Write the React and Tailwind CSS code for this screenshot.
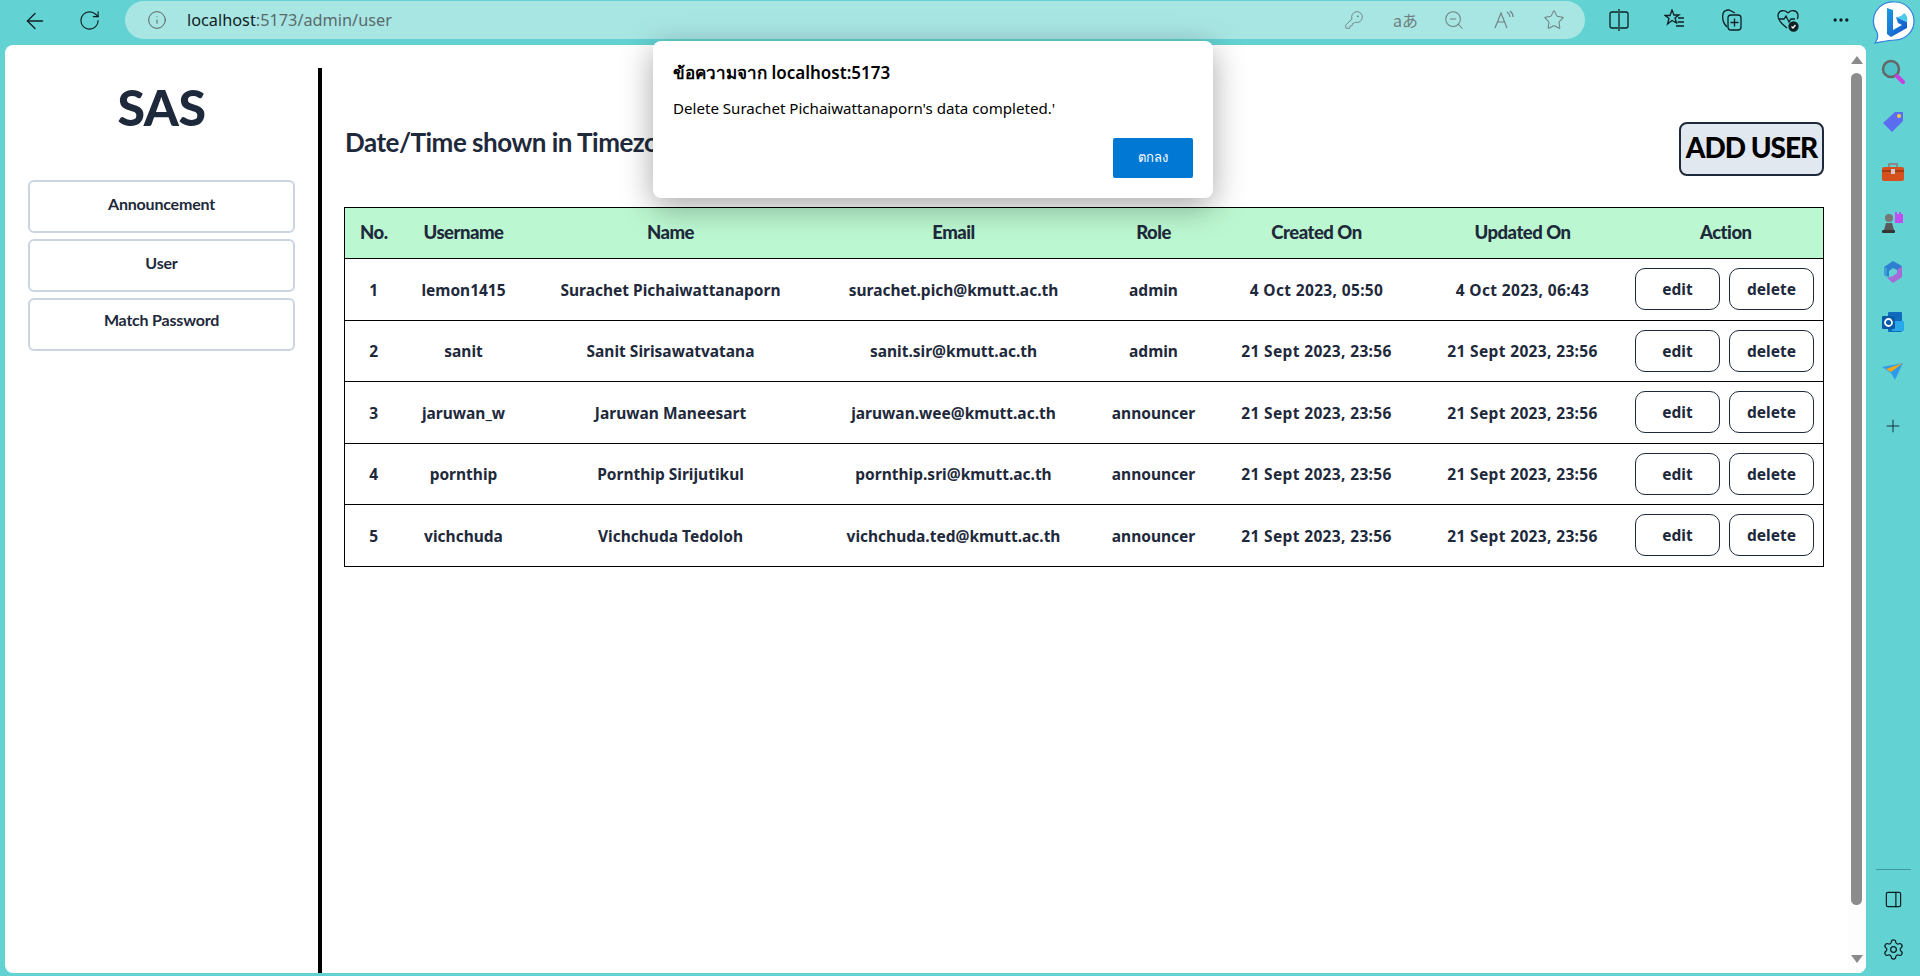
import React from "react";
import { ArrowLeft, RotateCw, Info, KeyRound, ZoomOut, Star, Plus, Settings, PanelRight, MoreHorizontal } from "lucide-react";

const users = [
  ["1", "lemon1415", "Surachet Pichaiwattanaporn", "surachet.pich@kmutt.ac.th", "admin", "4 Oct 2023, 05:50", "4 Oct 2023, 06:43"],
  ["2", "sanit", "Sanit Sirisawatvatana", "sanit.sir@kmutt.ac.th", "admin", "21 Sept 2023, 23:56", "21 Sept 2023, 23:56"],
  ["3", "jaruwan_w", "Jaruwan Maneesart", "jaruwan.wee@kmutt.ac.th", "announcer", "21 Sept 2023, 23:56", "21 Sept 2023, 23:56"],
  ["4", "pornthip", "Pornthip Sirijutikul", "pornthip.sri@kmutt.ac.th", "announcer", "21 Sept 2023, 23:56", "21 Sept 2023, 23:56"],
  ["5", "vichchuda", "Vichchuda Tedoloh", "vichchuda.ted@kmutt.ac.th", "announcer", "21 Sept 2023, 23:56", "21 Sept 2023, 23:56"],
];
const heads = [["No.", "w-[58px]"], ["Username", "w-[122px]"], ["Name", "w-[292px]"], ["Email", "w-[274px]"], ["Role", "w-[126px]"], ["Created On", "w-[200px]"], ["Updated On", "w-[212px]"], ["Action", ""]];

const Bing = () => (
  <svg width="48" height="48" viewBox="0 0 48 48">
    <defs>
      <linearGradient id="bingA" x1="0" y1="0" x2="1" y2="1"><stop offset="0" stopColor="#1b9de2" /><stop offset="1" stopColor="#1450c8" /></linearGradient>
    </defs>
    <path d="M25 3a19 19 0 0 1 0 38c-6 0-12 1.500-20 3 3-4 3.500-7 2-11A19 19 0 0 1 25 3z" fill="#fff" stroke="#2f80e0" strokeWidth="1.200" />
    <path d="M17 9l6 2v20l9-5-4-2-2-6 11 5v6l-16 9-4-3z" fill="url(#bingA)" />
    <path d="M26 18l11 5c1-3 0-7-3-9-1 2-4 4-8 4z" fill="#36c5e8" opacity=".9" />
  </svg>
);

const Rail = () => (
  <div className="w-[54px] h-[928px] flex flex-col items-center relative">
    <svg className="mt-[13px]" width="24" height="28" viewBox="0 0 24 28"><circle cx="10" cy="11" r="8" fill="#4fc3c9" stroke="#666" strokeWidth="2.500" /><path d="M16 18l6 6" stroke="#c740e0" strokeWidth="4" strokeLinecap="round" /></svg>
    <svg className="mt-[24px]" width="24" height="24" viewBox="0 0 24 24"><path d="M14 2h8v9L11 22 2 13z" fill="#5b6cf0" /><circle cx="18" cy="6" r="2" fill="#f5d033" /></svg>
    <svg className="mt-[28px]" width="24" height="20" viewBox="0 0 24 20"><path d="M8 5V2h8v3" fill="none" stroke="#8a8a8a" strokeWidth="2" /><rect x="1" y="5" width="22" height="14" rx="2" fill="#d5501c" /><rect x="1" y="8" width="22" height="2" fill="#a53c12" /><rect x="10" y="7" width="4" height="5" fill="#ccc" /></svg>
    <svg className="mt-[28px]" width="24" height="24" viewBox="0 0 24 24"><path d="M14 2h2v2h2V2h2v2h2V2v11h-8z" fill="#c04ef0" /><circle cx="8" cy="8" r="4" fill="#777" /><path d="M5 13h6l2 7H3z" fill="#5a5a5a" /><rect x="1" y="20" width="13" height="3" rx="1" fill="#333" /></svg>
    <svg className="mt-[26px]" width="22" height="24" viewBox="0 0 22 24"><path d="M11 1l9 5-3 5-6-3-4 3v6L2 15V7z" fill="#2d7fd0" /><path d="M20 6v11l-9 6-6-5 6-2 4-3v-3z" fill="#a66bd8" /><path d="M2 7l3 1v9l-3-2z" fill="#3c9fd8" /></svg>
    <svg className="mt-[27px]" width="22" height="22" viewBox="0 0 22 22"><rect x="6" y="1" width="14" height="20" rx="1" fill="#0f6cbd" /><path d="M10 10h12v10H10z" fill="#28a8ea" /><rect x="0" y="5" width="13" height="13" rx="1" fill="#0a5aa8" /><circle cx="6.500" cy="11.500" r="3.500" fill="none" stroke="#fff" strokeWidth="1.800" /></svg>
    <svg className="mt-[30px]" width="22" height="18" viewBox="0 0 22 18"><path d="M0 4l21-4-8 17-4-7z" fill="#2f9be8" /><path d="M4 6L21 0 9 9z" fill="#f0a818" /></svg>
    <Plus className="mt-[35px] text-[#123]" size={20} strokeWidth={1.100} />
    <div className="flex-1" />
    <div className="w-[35px] h-px bg-[#3f9a9c] mb-[20px]" />
    <PanelRight size={19} strokeWidth={1.500} className="text-[#0b1e22] mb-[29px]" />
    <Settings size={23} strokeWidth={1.300} className="text-[#0b1e22] mb-[12px]" />
  </div>
);

export default function App() {
  return (
    <div className="w-[1920px] h-[976px] bg-[#62d2d2] overflow-hidden relative font-['Noto_Sans',sans-serif] text-[#1e293b]">
      {/* Browser toolbar */}
      <div className="h-[45px] flex items-center relative">
        <ArrowLeft className="ml-[22px] -mt-[4px] text-[#0f2024]" size={26} strokeWidth={1.200} />
        <RotateCw className="ml-[30px] -mt-[4px] text-[#0f2024]" size={23} strokeWidth={1.200} />
        <div className="ml-[24px] w-[1460px] h-[38px] -mt-[5px] rounded-full bg-[#a8e6e4] flex items-center">
          <Info className="ml-[22px] text-[#555]" size={20} strokeWidth={1.100} />
          <span className="ml-[20px] text-[16.300px] text-[#5a6a6c]"><span className="text-[#101c1e]">localhost</span>:5173/admin/user</span>
          <div className="flex-1" />
          <div className="flex items-center gap-[29px] mr-[20px] text-[#6f7d7e]">
            <KeyRound size={20} strokeWidth={1.100} />
            <span className="text-[16px] w-[21px] leading-none whitespace-nowrap font-['Noto_Sans_CJK_JP','Noto_Sans',sans-serif]">aあ</span>
            <ZoomOut size={22} strokeWidth={1.100} />
            <svg width="20" height="20" viewBox="0 0 20 20" fill="none" stroke="currentColor" strokeWidth="1.100"><path d="M1 18L7 3l6 15M3.500 12h7" /><path d="M13 2c2 1.500 3 3 3 5M16 1c2 1.500 3 3.500 3 6" /></svg>
            <Star size={22} strokeWidth={1.100} />
          </div>
        </div>
        <div className="flex items-center -mt-[5px] text-[#0f2024]">
          <svg className="ml-[24px]" width="20" height="22" viewBox="0 0 20 22" fill="none" stroke="currentColor" strokeWidth="1.300"><path d="M9 3H3a2 2 0 0 0-2 2v12a2 2 0 0 0 2 2h6M11 3h6a2 2 0 0 1 2 2v12a2 2 0 0 1-2 2h-6M10 0v22" /></svg>
          <svg className="ml-[35px]" width="22" height="22" viewBox="0 0 22 22" fill="none" stroke="currentColor" strokeWidth="1.300"><path d="M8 1l2 5h5l-4 3 1.500 5L8 11.500 3.500 15 5 9.500 1 6.500h5z" /><path d="M14 9h6M13.500 13h6.500M12 17h8" /></svg>
          <svg className="ml-[35px]" width="22" height="24" viewBox="0 0 22 24" fill="none" stroke="currentColor" strokeWidth="1.300"><path d="M6 19c-3-3-5-8-4-13 .5-3 3-4 6-4l6 3" /><rect x="7" y="7" width="13" height="15" rx="3" /><path d="M13.500 10.500v8M9.500 14.500h8" /></svg>
          <svg className="ml-[33px]" width="24" height="24" viewBox="0 0 24 24" fill="none" stroke="currentColor" strokeWidth="1.300"><path d="M12 5c-3-4-10-3-10 3 0 5 5 9 9 12M12 5c3-4 10-3 10 3 0 1-.3 2-.7 3" /><path d="M3 11h5l2-3 3 6 2-3h4" /><circle cx="17.500" cy="18.500" r="4.500" fill="#0f2024" /><path d="M15.500 18.500l1.500 1.500 2.500-3" stroke="#fff" /></svg>
          <MoreHorizontal className="ml-[31px]" size={20} />
          <div className="ml-[19px] mt-[5px]"><Bing /></div>
        </div>
      </div>

      <div className="flex">
        {/* Page */}
        <div className="ml-[5px] w-[1861px] h-[928px] rounded-[8px] bg-white flex overflow-hidden">
          <aside className="w-[313px] flex flex-col items-center">
            <h1 className="mt-[22px] h-[82px] text-[50px] leading-[80px] font-black font-['Lato',sans-serif] tracking-[-0.5px]">SAS</h1>
            <div className="mt-[31px] flex flex-col gap-[6px] w-[267px] font-['Lato',sans-serif] font-bold text-[16px]">
              {[["Announcement", "pt-[10px]"], ["User", "pt-[10px]"], ["Match Password", "pt-[8px]"]].map(([t, p]) => (
                <div key={t} className={`h-[53px] rounded-[6px] border-2 border-[#cbd5e1] text-center leading-[24px] tracking-[-0.2px] ${p}`}>{t}</div>
              ))}
            </div>
          </aside>
          <div className="w-[4px] mt-[23px] bg-black" />
          <main className="flex-1 pl-[22px] pr-[24px] pt-[77px]">
            <div className="h-[54px] flex items-center justify-between">
              <h2 className="pl-[1px] pb-[13px] text-[26px] font-bold tracking-[-0.5px] font-['Lato',sans-serif]">Date/Time shown in Timezone: Asia/Bangkok</h2>
              <button className="w-[145px] h-[54px] pb-[4px] rounded-[8px] border-2 border-[#1e293b] bg-[#e2e8f0] text-black text-[28px] font-black tracking-[-1px] font-['Lato',sans-serif] whitespace-nowrap">ADD USER</button>
            </div>
            <table className="mt-[31px] w-[1480px] table-fixed border-collapse border border-black">
              <thead>
                <tr className="h-[51px] bg-[#bbf7d0] border-b border-black font-['Lato',sans-serif] text-[18.500px]">
                  {heads.map(([h, w]) => <th key={h} className={`${w} font-black tracking-[-0.5px] p-0`}>{h}</th>)}
                </tr>
              </thead>
              <tbody>
                {users.map((u) => (
                  <tr key={u[0]} className="h-[61.500px] border-b border-black text-[15.500px] font-bold">
                    {u.map((c, i) => <td key={i} className={`text-center p-0 pt-[2px] whitespace-nowrap ${i > 4 ? "tracking-[0.35px]" : ""}`}>{c}</td>)}
                    <td className="p-0">
                      <div className="flex gap-[9px] pl-[6px]">
                        <button className="w-[85px] h-[42px] pt-[1px] pl-[1px] rounded-[10px] border border-[#1e293b] font-bold">edit</button>
                        <button className="w-[85px] h-[42px] pt-[1px] pl-[1px] rounded-[10px] border border-[#1e293b] font-bold">delete</button>
                      </div>
                    </td>
                  </tr>
                ))}
              </tbody>
            </table>
          </main>
          {/* Scrollbar */}
          <div className="w-[18px] bg-[#fdfdfd] flex flex-col items-center pr-[1px]">
            <div className="mt-[11px] w-0 h-0 border-x-[6px] border-x-transparent border-b-[8px] border-b-[#8a8a8a]" />
            <div className="mt-[9px] w-[11px] h-[832px] rounded-full bg-[#8c8c8c]" />
            <div className="mt-[50px] w-0 h-0 border-x-[6px] border-x-transparent border-t-[8px] border-t-[#8a8a8a]" />
          </div>
        </div>
        <Rail />
      </div>

      {/* Alert dialog */}
      <div className="absolute left-[653px] top-[41px] w-[560px] h-[157px] rounded-[8px] bg-white shadow-[0_8px_32px_rgba(0,0,0,0.35)] pt-[21px] px-[20px] text-black">
        <div className="text-[17px] font-semibold leading-[22px] font-['Noto_Sans','Noto_Sans_CJK_SC',sans-serif]">ข้อความจาก localhost:5173</div>
        <div className="mt-[14px] text-[15.100px] leading-[20px]">Delete Surachet Pichaiwattanaporn's data completed.'</div>
        <div className="flex justify-end mt-[20px]">
          <button className="w-[80px] h-[40px] rounded-[2px] bg-[#0078d4] text-white text-[13px]">ตกลง</button>
        </div>
      </div>
    </div>
  );
}
